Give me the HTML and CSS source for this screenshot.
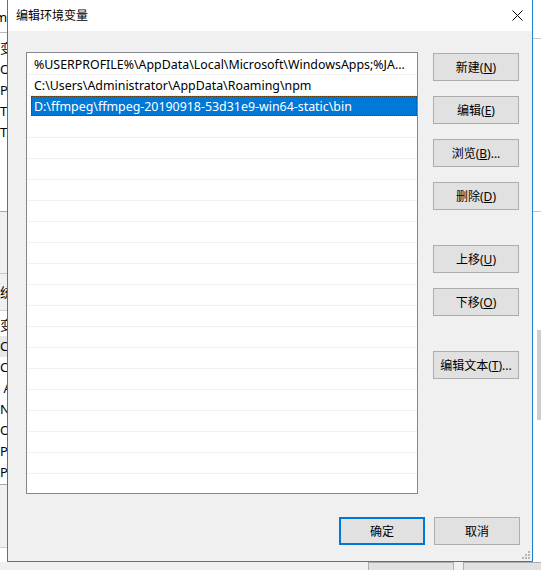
FILE: index.html
```html
<!DOCTYPE html>
<html lang="zh-CN">
<head>
    <meta charset="UTF-8">
    <title>编辑环境变量</title>
    <link rel="stylesheet" href="styles.css">
</head>
<body>
    <div class="desktop">
        <!-- ventana de fondo (Variables de entorno) -->
        <div class="backwin">
            <div class="bw-left">
                <div class="bw-head">m</div>
                <div class="bw-rows first">
                    <div class="bw-row">变</div>
                    <div class="bw-row">O</div>
                    <div class="bw-row">Pa</div>
                    <div class="bw-row">TE</div>
                    <div class="bw-row">TM</div>
                </div>
                <div class="bw-gap"></div>
                <div class="bw-band"></div>
                <div class="bw-title">统</div>
                <div class="bw-rows second">
                    <div class="bw-row">变</div>
                    <div class="bw-row hover">CL</div>
                    <div class="bw-row">Co</div>
                    <div class="bw-row">&nbsp;A</div>
                    <div class="bw-row">N</div>
                    <div class="bw-row">O</div>
                    <div class="bw-row">Pa</div>
                    <div class="bw-row">PA</div>
                </div>
                <div class="bw-foot"></div>
            </div>
            <div class="bw-right">
                <div class="bw-rtop"></div>
                <div class="bw-rlist"></div>
                <div class="bw-rscroll"></div>
                <div class="bw-rbottom"></div>
            </div>
            <div class="bw-buttons">
                <span class="bw-btn"></span>
                <span class="bw-btn"></span>
            </div>
        </div>

        <div class="dialog">
            <div class="titlebar">
                <span class="title">编辑环境变量</span>
                <span class="close">
                    <svg width="11" height="11" viewBox="0 0 11 11">
                        <path d="M0.5 0.5 L10.5 10.5 M10.5 0.5 L0.5 10.5" stroke="#000" stroke-width="1" fill="none"/>
                    </svg>
                </span>
            </div>
            <div class="content">
                <div class="main">
                    <div class="listbox">
                        <div class="item">%USERPROFILE%\AppData\Local\Microsoft\WindowsApps;%JA...</div>
                        <div class="item">C:\Users\Administrator\AppData\Roaming\npm</div>
                        <div class="item selected"><span>D:\ffmpeg\ffmpeg-20190918-53d31e9-win64-static\bin</span></div>
                        <div class="item"></div>
                        <div class="item"></div>
                        <div class="item"></div>
                        <div class="item"></div>
                        <div class="item"></div>
                        <div class="item"></div>
                        <div class="item"></div>
                        <div class="item"></div>
                        <div class="item"></div>
                        <div class="item"></div>
                        <div class="item"></div>
                        <div class="item"></div>
                        <div class="item"></div>
                        <div class="item"></div>
                        <div class="item"></div>
                        <div class="item"></div>
                        <div class="item"></div>
                        <div class="item"></div>
                    </div>
                    <div class="side">
                        <button class="btn">新建(<u>N</u>)</button>
                        <button class="btn">编辑(<u>E</u>)</button>
                        <button class="btn">浏览(<u>B</u>)...</button>
                        <button class="btn">删除(<u>D</u>)</button>
                        <button class="btn group">上移(<u>U</u>)</button>
                        <button class="btn">下移(<u>O</u>)</button>
                        <button class="btn group">编辑文本(<u>T</u>)...</button>
                    </div>
                </div>
                <div class="footer">
                    <button class="btn default">确定</button>
                    <button class="btn">取消</button>
                </div>
                <svg class="grip" width="9" height="9" viewBox="0 0 9 9">
                    <rect x="7" y="1" width="2" height="2" fill="#b8b8b8"/>
                    <rect x="4" y="4" width="2" height="2" fill="#b8b8b8"/>
                    <rect x="7" y="4" width="2" height="2" fill="#b8b8b8"/>
                    <rect x="1" y="7" width="2" height="2" fill="#b8b8b8"/>
                    <rect x="4" y="7" width="2" height="2" fill="#b8b8b8"/>
                    <rect x="7" y="7" width="2" height="2" fill="#b8b8b8"/>
                </svg>
            </div>
        </div>
    </div>
</body>
</html>
```

FILE: styles.css
```css
body {
    margin: 0;
    padding: 0;
    font-family: "Noto Sans", "Noto Sans CJK SC", sans-serif;
    font-size: 12px;
    color: #000;
}

.desktop {
    position: relative;
    width: 541px;
    height: 570px;
    overflow: hidden;
    background-color: #fff;
}

/* ventana de fondo */
.backwin {
    display: flex;
    flex-wrap: wrap;
    justify-content: space-between;
    height: 570px;
}

.bw-left {
    width: 7px;
    height: 562px;
    overflow: hidden;
    white-space: nowrap;
    font-size: 13px;
}

.bw-head {
    height: 32px;
    line-height: 34px;
    border-bottom: 1px solid #b9b9b9;
    margin-left: -5px;
}

.bw-rows.first {
    padding-top: 5px;
    height: 173px;
}

.bw-row {
    height: 21px;
    line-height: 21px;
}

.bw-row.hover {
    background-color: #e8e8e8;
}

.bw-gap {
    border-bottom: 1px solid #a8a8a8;
}

.bw-band {
    height: 61px;
    background-color: #f0f0f0;
    border-bottom: 1px solid #c8c8c8;
}

.bw-title {
    height: 36px;
    line-height: 36px;
    background-color: #f0f0f0;
    border-bottom: 1px solid #d0d0d0;
}

.bw-rows.second {
    padding-top: 4px;
    height: 169px;
    border-bottom: 1px solid #a8a8a8;
}

.bw-foot {
    height: 62px;
    background-color: #f0f0f0;
    border-bottom: 1px solid #d0d0d0;
}

.bw-right {
    width: 8px;
    height: 562px;
}

.bw-rtop {
    height: 38px;
    border-bottom: 1px solid #c8c8c8;
}

.bw-rlist {
    height: 172px;
    border-bottom: 1px solid #c8c8c8;
}

.bw-rscroll {
    height: 90px;
    margin-top: 118px;
    margin-left: 4px;
    background-color: #cdcdcd;
}

.bw-rbottom {
    height: 100px;
}

.bw-buttons {
    width: 100%;
    height: 8px;
    display: flex;
    gap: 9px;
    padding-left: 368px;
    background-color: #f0f0f0;
}

.bw-btn {
    width: 84px;
    height: 20px;
    background-color: #e1e1e1;
    border: 1px solid #adadad;
}

/* dialogo */
.dialog {
    position: absolute;
    left: 7px;
    top: -1px;
    width: 524px;
    height: 561px;
    border: 1px solid #1883d7;
    background-color: #f0f0f0;
    display: flex;
    flex-direction: column;
}

.titlebar {
    height: 31px;
    background-color: #fff;
    display: flex;
    align-items: center;
    justify-content: space-between;
}

.title {
    padding-left: 8px;
    padding-bottom: 1px;
}

.close {
    width: 30px;
    height: 31px;
    display: flex;
    align-items: center;
    justify-content: center;
}

.content {
    position: relative;
    flex: 1;
    padding: 21px 12px 0 18px;
}

.main {
    display: flex;
    gap: 15px;
}

.listbox {
    width: 390px;
    height: 439px;
    padding-top: 1px;
    border: 1px solid #828790;
    background-color: #fff;
    overflow: hidden;
}

.item {
    height: 20px;
    line-height: 22px;
    border-bottom: 1px solid #f0f0f0;
    padding-left: 7px;
    white-space: nowrap;
    overflow: hidden;
    font-size: 12.4px;
}

.item.selected {
    padding-left: 4px;
    border-bottom-color: #fff;
}

.item.selected span {
    display: block;
    height: 18px;
    line-height: 20px;
    padding-left: 2px;
    background-color: #0078d7;
    color: #fff;
    border: 1px dotted #5a3c10;
}

.side {
    display: flex;
    flex-direction: column;
    gap: 15px;
    padding-top: 1px;
}

.btn {
    width: 86px;
    height: 28px;
    padding: 0;
    background-color: #e1e1e1;
    border: 1px solid #adadad;
    font-family: "Noto Sans", "Noto Sans CJK SC", sans-serif;
    font-size: 12px;
    color: #000;
}

.btn.group {
    margin-top: 20px;
}

.footer {
    display: flex;
    justify-content: flex-end;
    gap: 9px;
    margin-top: 23px;
}

.btn.default {
    border: 2px solid #0078d7;
}

.grip {
    position: absolute;
    right: 2px;
    bottom: 2px;
}
```
